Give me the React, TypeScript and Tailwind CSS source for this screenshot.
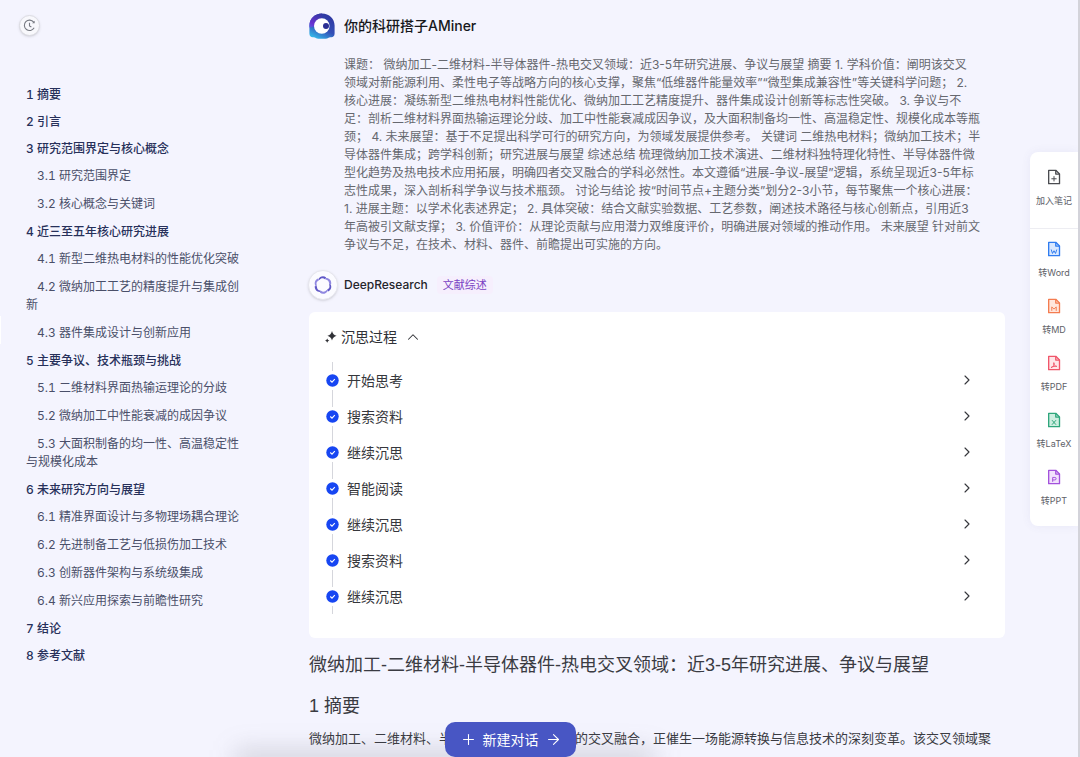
import React from "react";
import { ArrowRight, ChevronRight, ChevronUp, Plus } from "lucide-react";

type OutlineItem = { text: string; sub?: boolean };

const outline: OutlineItem[] = [
  { text: "1 摘要" },
  { text: "2 引言" },
  { text: "3 研究范围界定与核心概念" },
  { text: "3.1 研究范围界定", sub: true },
  { text: "3.2 核心概念与关键词", sub: true },
  { text: "4 近三至五年核心研究进展" },
  { text: "4.1 新型二维热电材料的性能优化突破", sub: true },
  { text: "4.2 微纳加工工艺的精度提升与集成创新", sub: true },
  { text: "4.3 器件集成设计与创新应用", sub: true },
  { text: "5 主要争议、技术瓶颈与挑战" },
  { text: "5.1 二维材料界面热输运理论的分歧", sub: true },
  { text: "5.2 微纳加工中性能衰减的成因争议", sub: true },
  { text: "5.3 大面积制备的均一性、高温稳定性与规模化成本", sub: true },
  { text: "6 未来研究方向与展望" },
  { text: "6.1 精准界面设计与多物理场耦合理论", sub: true },
  { text: "6.2 先进制备工艺与低损伤加工技术", sub: true },
  { text: "6.3 创新器件架构与系统级集成", sub: true },
  { text: "6.4 新兴应用探索与前瞻性研究", sub: true },
  { text: "7 结论" },
  { text: "8 参考文献" },
];

const prompt = `课题： 微纳加工-二维材料-半导体器件-热电交叉领域：近3-5年研究进展、争议与展望 摘要 1. 学科价值：阐明该交叉
领域对新能源利用、柔性电子等战略方向的核心支撑，聚焦“低维器件能量效率”“微型集成兼容性”等关键科学问题； 2.
核心进展：凝练新型二维热电材料性能优化、微纳加工工艺精度提升、器件集成设计创新等标志性突破。 3. 争议与不
足：剖析二维材料界面热输运理论分歧、加工中性能衰减成因争议，及大面积制备均一性、高温稳定性、规模化成本等瓶
颈； 4. 未来展望：基于不足提出科学可行的研究方向，为领域发展提供参考。 关键词 二维热电材料；微纳加工技术；半
导体器件集成；跨学科创新；研究进展与展望 综述总结 梳理微纳加工技术演进、二维材料独特理化特性、半导体器件微
型化趋势及热电技术应用拓展，明确四者交叉融合的学科必然性。本文遵循“进展-争议-展望”逻辑，系统呈现近3-5年标
志性成果，深入剖析科学争议与技术瓶颈。 讨论与结论 按“时间节点+主题分类”划分2-3小节，每节聚焦一个核心进展：
1. 进展主题：以学术化表述界定； 2. 具体突破：结合文献实验数据、工艺参数，阐述技术路径与核心创新点，引用近3
年高被引文献支撑； 3. 价值评价：从理论贡献与应用潜力双维度评价，明确进展对领域的推动作用。 未来展望 针对前文
争议与不足，在技术、材料、器件、前瞻提出可实施的方向。`;

const steps = ["开始思考", "搜索资料", "继续沉思", "智能阅读", "继续沉思", "搜索资料", "继续沉思"];

const exportsList = [
  { label: "转Word", color: "text-[#2f7cf0]", fill: "#d9e8ff", mark: "M5 10 L6.3 14 L8 11 L9.7 14 L11 10" },
  { label: "转MD", color: "text-[#f47c50]", fill: "#ffe6dc", mark: "M5.5 14 V10 L8 12.5 L10.5 10 V14" },
  { label: "转PDF", color: "text-[#f0566a]", fill: "#ffe5e8", mark: "M5 14 C7.5 13 8.2 11 7.8 8.6 C8 11.4 9 12.8 11.2 12.8 C9 12.4 7 12.8 5 14" },
  { label: "转LaTeX", color: "text-[#2fa67c]", fill: "#cdeee0", mark: "M6 9.5 L10 14 M10 9.5 L6 14" },
  { label: "转PPT", color: "text-[#a352dc]", fill: "#f2e2fc", mark: "M6.5 14 V9.5 H9 A1.4 1.4 0 0 1 9 12.3 H6.5" },
];

function FileIcon({ mark, fill = "none" }: { mark: string; fill?: string }) {
  return (
    <svg viewBox="0 0 16 18" className="h-4 w-4" fill="none" stroke="currentColor" strokeWidth="1.5" strokeLinejoin="round" aria-hidden="true">
      <path d="M2 1.5 H10 L14.2 5.7 V16.5 H2 Z" fill={fill} />
      <path d="M10 1.5 V5.7 H14.2" />
      <path d={mark} strokeWidth="1.1" strokeLinecap="round" />
    </svg>
  );
}

function AMinerLogo() {
  return (
    <svg viewBox="0 0 26 26" className="h-[26px] w-[26px]" aria-hidden="true">
      <defs>
        <linearGradient id="aminer" x1="0.75" y1="0.1" x2="0.3" y2="1">
          <stop offset="0" stopColor="#2f38a2" />
          <stop offset="0.55" stopColor="#3350b8" />
          <stop offset="1" stopColor="#34b4e6" />
        </linearGradient>
        <linearGradient id="aminerSide" x1="0.7" y1="0" x2="0.2" y2="1">
          <stop offset="0" stopColor="#3438a4" />
          <stop offset="0.75" stopColor="#6a32d0" />
          <stop offset="1" stopColor="#5f52dc" />
        </linearGradient>
      </defs>
      <path d="M13 0.4 C20.2 0.4 25.6 5.6 25.6 12.6 V20.5 C25.6 23.4 23.6 24.6 21.6 24.2 C19.6 24 19 25.7 16.6 25.7 H9.4 C7 25.7 6.4 24 4.4 24.2 C2.4 24.6 0.4 23.4 0.4 20.5 V12.6 C0.4 5.6 5.8 0.4 13 0.4 Z" fill="url(#aminer)" />
      <path d="M13 0.4 C5.8 0.4 0.4 5.6 0.4 12.6 V14.5 L7 13 L13 6 Z" fill="url(#aminerSide)" />
      <circle cx="12.8" cy="13" r="7.8" fill="#fff" />
      <circle cx="17" cy="13" r="3" fill="#2b2f93" />
    </svg>
  );
}

function ResearchLogo() {
  return (
    <svg viewBox="0 0 20 20" className="h-5 w-5" aria-hidden="true">
      {[0, 60, 120, 180, 240, 300].map((a) => (
        <path key={a} d="M5.2 4.6 C6.6 1.2 10.4 0.2 13.2 2.4 L12 4.2 C10 2.8 8 3 6.4 5 Z" fill={a % 120 === 0 ? "#6058c6" : "#9088e0"} transform={`rotate(${a} 10 10)`} />
      ))}
    </svg>
  );
}

export default function App() {
  return (
    <div className="relative flex h-screen overflow-hidden border-r-2 border-[#d3d3da] bg-[#f4f4fe] font-['Inter','Noto_Sans_CJK_SC',sans-serif]">
      <aside className="w-[248px] shrink-0 pt-[15px]">
        <button aria-label="历史记录" className="ml-[19px] flex h-[21px] w-[21px] items-center justify-center rounded-full border border-[#dcdce2] bg-[#f8f8fc] text-[#777a82] shadow-sm">
          <svg viewBox="0 0 14 14" className="h-[13px] w-[13px]" fill="none" stroke="currentColor" strokeWidth="1.2" aria-hidden="true">
            <path d="M12 9.5 A5.6 5.6 0 1 1 11.5 3.4" />
            <path d="M12.6 1.8 V4.6 H9.8 Z" fill="currentColor" stroke="none" />
            <path d="M7 4 V7.4 L9 8.6" />
          </svg>
        </button>
        <nav aria-label="目录" className="mt-[50px] ml-[26px] flex w-[218px] flex-col gap-[10px] text-[12px] tabular-nums">
          {outline.map((item) => (
            <a
              key={item.text}
              href="#outline"
              className={item.sub ? "block indent-[11px] leading-[18px] text-[#4a4f69]" : "block leading-[17px] font-medium text-[#27305a]"}
            >
              {item.text}
            </a>
          ))}
        </nav>
      </aside>

      <main className="ml-[61px] min-w-0 flex-1 pt-[13px]">
        <header className="flex items-center gap-[9px]">
          <AMinerLogo />
          <h2 className="text-[14px] leading-[20px] font-medium text-[#17181c]">你的科研搭子AMiner</h2>
        </header>
        <p className="mt-[17px] ml-[35px] text-[12px] leading-[18px] whitespace-pre-line text-[#66686f]">{prompt}</p>

        <div className="mt-[16px] -ml-px flex items-center">
          <span className="flex h-[30px] w-[30px] items-center justify-center rounded-full border border-[#e6e6ee] bg-[#fbfbff] shadow-sm">
            <ResearchLogo />
          </span>
          <h2 className="ml-[6px] text-[12px] leading-[20px] font-medium text-[#24252b]">DeepResearch</h2>
          <span className="ml-[9px] rounded bg-[#f6effd] px-[6px] text-[11px] leading-[18px] text-[#7a3fc4]">文献综述</span>
        </div>

        <section className="mt-[12px] mr-[25px] rounded-md bg-white px-[16px] pt-[15px] pb-[24px]">
          <button className="flex items-center text-[14px] leading-[20px] text-[#303136]">
            <svg viewBox="0 0 12 12" className="mr-[4px] h-[12px] w-[12px]" fill="currentColor" aria-hidden="true">
              <path d="M7 0 Q7.9 3.9 11.6 4.8 Q7.9 5.7 7 9.6 Q6.1 5.7 2.4 4.8 Q6.1 3.9 7 0 Z" />
              <path d="M2.2 7.4 Q2.7 9.1 4.4 9.6 Q2.7 10.1 2.2 11.8 Q1.7 10.1 0 9.6 Q1.7 9.1 2.2 7.4 Z" />
            </svg>
            沉思过程
            <ChevronUp className="ml-[7px] h-[18px] w-[18px]" strokeWidth={1.4} />
          </button>
          <ol className="mt-[15px]">
            {steps.map((step, i) => (
              <li key={i}>
                <button className="flex h-[36px] w-full items-center text-[14px] text-[#36373c]">
                  <span className="ml-px flex h-full w-[13px] flex-col items-center gap-[3px]">
                    <span className="w-px flex-1 bg-[#d5d6dc]" />
                    <svg viewBox="0 0 13 13" className="h-[13px] w-[13px]" aria-hidden="true">
                      <circle cx="6.5" cy="6.5" r="6.2" fill="#1746f2" />
                      <path d="M4.3 6.5 L6 8.1 L8.8 5.1" fill="none" stroke="#fff" strokeWidth="1.1" />
                    </svg>
                    <span className="w-px flex-1 bg-[#d5d6dc]" />
                  </span>
                  <span className="ml-[8px] flex-1 text-left">{step}</span>
                  <ChevronRight className="mr-[14px] h-[16px] w-[16px]" strokeWidth={1.7} />
                </button>
              </li>
            ))}
          </ol>
        </section>

        <article className="mr-[25px] text-[#3a3b42]">
          <h1 className="mt-[14px] font-['Liberation_Sans','Noto_Sans_CJK_SC',sans-serif] text-[18px] leading-[26px]">
            微纳加工-二维材料-半导体器件-热电交叉领域：近3-5年研究进展、争议与展望
          </h1>
          <h2 className="mt-[15px] font-['Liberation_Sans','Noto_Sans_CJK_SC',sans-serif] text-[18px] leading-[26px]">1 摘要</h2>
          <p className="mt-[7px] text-[13px] leading-[24px]">
            微纳加工、二维材料、半导体器件-热电等领域的交叉融合，正催生一场能源转换与信息技术的深刻变革。该交叉领域聚
          </p>
        </article>
      </main>

      <aside className="mt-[152px] w-[48px] shrink-0 self-start rounded-l-lg bg-white text-[9px] leading-[14px] text-[#606168] shadow-[0_0_10px_rgba(90,90,150,0.08)]">
        <button className="flex h-[77px] w-full flex-col items-center border-b border-[#ededf2] pt-[17px]">
          <span className="text-[#4a4b50]">
            <FileIcon mark="M8 8.5 V13.5 M5.5 11 H10.5" />
          </span>
          <span className="mt-[9px]">加入笔记</span>
        </button>
        <div className="flex flex-col pt-[12px]">
          {exportsList.map((e) => (
            <button key={e.label} className="flex h-[57px] flex-col items-center">
              <span className={e.color}>
                <FileIcon mark={e.mark} fill={e.fill} />
              </span>
              <span className="mt-[9px]">{e.label}</span>
            </button>
          ))}
        </div>
      </aside>

      <span className="absolute top-[316px] left-0 h-[28px] w-px bg-white" />
      <div className="pointer-events-none absolute -bottom-[16px] left-[235px] h-[24px] w-[420px] bg-[#5a5a66]/20 blur-[12px]" />
      <button className="absolute bottom-0 left-[445px] flex h-[35px] w-[131px] items-center justify-center rounded-[10px] bg-[#4856c4] text-[14px] text-white">
        <Plus className="h-[17px] w-[17px]" strokeWidth={1.5} />
        <span className="mx-[6px]">新建对话</span>
        <ArrowRight className="h-[17px] w-[17px]" strokeWidth={1.5} />
      </button>
    </div>
  );
}
